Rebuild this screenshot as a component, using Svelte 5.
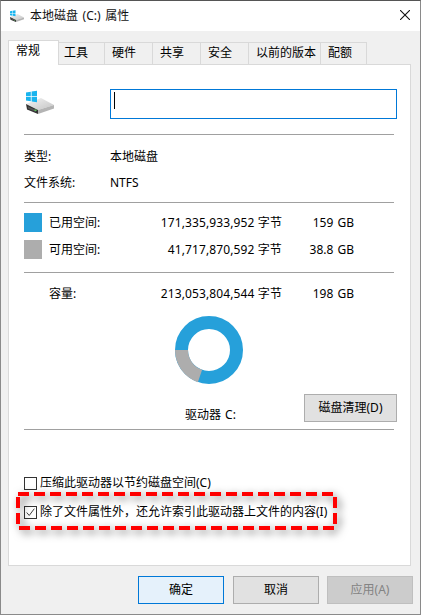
<script>
  const tabs = [
    { label: '工具', width: 46 },
    { label: '硬件', width: 48 },
    { label: '共享', width: 48 },
    { label: '安全', width: 48 },
    { label: '以前的版本', width: 72 },
    { label: '配额', width: 46 }
  ];
</script>

{#snippet driveIcon(size)}
  <svg class="drv" viewBox="0 0 32 32" width={size} height={size}>
    <defs>
      <linearGradient id="topface" x1="0" y1="0" x2="1" y2="1">
        <stop offset="0" stop-color="#f4f4f4" />
        <stop offset="1" stop-color="#c4c4c4" />
      </linearGradient>
    </defs>
    <path d="M2 16 17 10l13 7-16 5z" fill="url(#topface)" />
    <path d="M14 22l16-5v3.500L14 26z" fill="#b4b4b4" />
    <path d="M2 16l12 6v4L3 21.500z" fill="#333" />
    <path d="M4 18.500l8 3.500v2l-8-3.500z" fill="#555" />
    <rect x="10.500" y="21.500" width="2" height="1.500" fill="#58c058" />
    <g fill="#19b4ee">
      <path d="M2 4.500 6.800 3.700V8H2z" />
      <path d="M7.600 3.500 13 2.700V8H7.600z" />
      <path d="M2 8.800H6.800V13.300L2 12.600z" />
      <path d="M7.600 8.800H13V14.300L7.600 13.400z" />
    </g>
  </svg>
{/snippet}

<div class="win">
  <header class="title">
    <span class="tico">{@render driveIcon(16)}</span>
    <span class="ttext">本地磁盘 (C:) 属性</span>
    <svg class="close" viewBox="0 0 10 10" width="10" height="10"><path d="M0 0l10 10M10 0L0 10" stroke="#111" stroke-width="1.100" fill="none"/></svg>
  </header>

  <div class="body">
    <nav class="tabs">
      <div class="tab active">常规</div>
      {#each tabs as t}
        <div class="tab" style="width:{t.width}px">{t.label}</div>
      {/each}
    </nav>

    <section class="panel">
      <div class="namerow">
        {@render driveIcon(32)}
        <div class="input"><i class="caret"></i></div>
      </div>
      <hr class="first" />
      <dl class="info">
        <div class="irow"><dt>类型:</dt><dd>本地磁盘</dd></div>
        <div class="irow"><dt>文件系统:</dt><dd>NTFS</dd></div>
      </dl>
      <hr />
      <div class="space">
        <div class="srow"><i class="sw used"></i><span class="lab">已用空间:</span><span class="bytes">171,335,933,952 字节</span><span class="gb">159 GB</span></div>
        <div class="srow free"><i class="sw avail"></i><span class="lab">可用空间:</span><span class="bytes">41,717,870,592 字节</span><span class="gb">38.8 GB</span></div>
      </div>
      <hr class="third" />
      <div class="srow cap"><i class="sw"></i><span class="lab">容量:</span><span class="bytes">213,053,804,544 字节</span><span class="gb">198 GB</span></div>

      <div class="chartwrap">
        <svg viewBox="0 0 68 68" width="68" height="68">
          <circle cx="34" cy="34" r="27.500" fill="none" stroke="#26a0da" stroke-width="13"/>
          <path d="M6.500 34A27.500 27.500 0 0 0 25 60" fill="none" stroke="#adadad" stroke-width="13"/>
        </svg>
      </div>
      <div class="driverow">
        <span class="drive">驱动器 C:</span>
        <button class="clean">磁盘清理(D)</button>
      </div>
      <hr class="fourth" />

      <label class="chk one"><i class="box"></i>压缩此驱动器以节约磁盘空间(C)</label>
      <div class="hilite">
        <label class="chk"><i class="box"><svg viewBox="0 0 13 13" width="11" height="11"><path d="M2 6.500l3 3.500 6-8" fill="none" stroke="#333" stroke-width="1.100"/></svg></i>除了文件属性外，还允许索引此驱动器上文件的内容(I)</label>
        <svg class="dash" width="321" height="38" viewBox="0 0 321 38"><rect x="2" y="2" width="317" height="34" fill="none" stroke="#f00" stroke-width="4" stroke-dasharray="11 5"/></svg>
      </div>
    </section>

    <footer class="btns">
      <button class="b ok">确定</button>
      <button class="b">取消</button>
      <button class="b dis">应用(A)</button>
    </footer>
  </div>
</div>

<style>
  :global(body) { margin: 0; background: #fff; }
  .win {
    width: 421px; height: 615px; box-sizing: border-box; overflow: hidden;
    border: 1px solid #8a8a8a; border-top-color: #555;
    font: 12px/16px "Noto Sans", "Noto Sans CJK SC", sans-serif; color: #000;
    display: flex; flex-direction: column;
  }
  .title { height: 30px; background: #fff; display: flex; align-items: center; padding-left: 8px; flex: none; }
  .tico { width: 16px; height: 16px; margin: 2px 5px 0 0; flex: none; }
  .drv { display: block; flex: none; }
  .ttext { flex: 1; color: #111; word-spacing: 1.5px; }
  .close { margin: 0 10px 2px 0; flex: none; }
  .body { flex: 1; background: #f0f0f0; padding: 9px 9px 0 7px; display: flex; flex-direction: column; }
  .tabs { display: flex; align-items: flex-end; height: 24px; position: relative; z-index: 1; flex: none; }
  .tab {
    box-sizing: border-box; height: 22px; border: 1px solid #d9d9d9; border-bottom: 0; border-left: 0;
    padding: 2px 0 0 7px; background: #f0f0f0; white-space: nowrap;
  }
  .tab.active { width: 51px; height: 25px; margin-bottom: -1px; background: #fff; border-left: 1px solid #d9d9d9; }
  .tab.active + .tab { padding-left: 5px; }
  .panel { height: 502px; box-sizing: border-box; background: #fff; border: 1px solid #d9d9d9; padding: 0 16px 0 15px; display: flex; flex-direction: column; flex: none; }
  .namerow { display: flex; align-items: center; height: 30px; margin-top: 24px; }
  .input { margin: 0 -3px 0 54px; width: 287px; height: 30px; box-sizing: border-box; border: 1px solid #0078d7; padding: 2px 3px; flex: none; }
  .caret { display: block; width: 1px; height: 17px; background: #000; }
  hr { border: 0; height: 1px; background: #a0a0a0; margin: 0; flex: none; }
  .first { margin-top: 15px; }
  .info { margin: 0; padding: 14px 0 1px; }
  .irow { display: flex; height: 26px; }
  dt { width: 86px; }
  dd { margin: 0; }
  .space { padding-top: 10px; }
  .srow { display: flex; align-items: center; height: 19px; }
  .free { margin-top: 8px; }
  .sw { width: 18px; height: 19px; flex: none; }
  .used { background: #26a0da; }
  .avail { background: #adadad; }
  .lab { margin-left: 7px; width: 92px; }
  .bytes { width: 141px; text-align: right; white-space: nowrap; letter-spacing: .12px; }
  .gb { width: 72px; text-align: right; white-space: nowrap; word-spacing: 1px; }
  .third { margin-top: 13px; }
  .cap { margin-top: 11px; }
  .chartwrap { display: flex; justify-content: center; margin-top: 13px; }
  .chartwrap svg { display: block; }
  .driverow { display: flex; align-items: flex-start; margin-top: 10px; height: 28px; }
  .drive { margin-left: 161px; margin-top: 13px; word-spacing: 1px; }
  .clean {
    margin-left: auto; margin-right: -3px; width: 93px; height: 28px; box-sizing: border-box;
    background: #e1e1e1; border: 1px solid #adadad; font: inherit; color: #000; padding: 0;
  }
  .fourth { margin-top: 7px; }
  .chk { display: flex; align-items: center; white-space: nowrap; }
  .one { margin-top: 45px; }
  .box {
    width: 13px; height: 13px; box-sizing: border-box; border: 1px solid #333; background: #fff;
    margin-right: 3px; flex: none; display: flex; align-items: center; justify-content: center;
  }
  .hilite {
    position: relative; margin: 1px 0 0 -8px; width: 321px; height: 38px; box-sizing: border-box;
    padding: 2px 0 0 8px; display: flex; align-items: center; flex: none;
  }
  .dash { position: absolute; left: 0; top: 0; overflow: visible; filter: drop-shadow(3px 3px 4px rgba(0,0,0,.55)); pointer-events: none; }
  .btns { display: flex; justify-content: flex-end; gap: 9px; margin: 10px -2px 0 0; flex: none; }
  .b {
    width: 86px; height: 28px; box-sizing: border-box; border: 1px solid #adadad; background: #e1e1e1;
    font: inherit; color: #000; padding: 0;
  }
  .ok { background: #e5f1fb; border-color: #0078d7; }
  .dis { background: #ccc; border-color: #bfbfbf; color: #838383; margin-left: -1px; }
</style>
